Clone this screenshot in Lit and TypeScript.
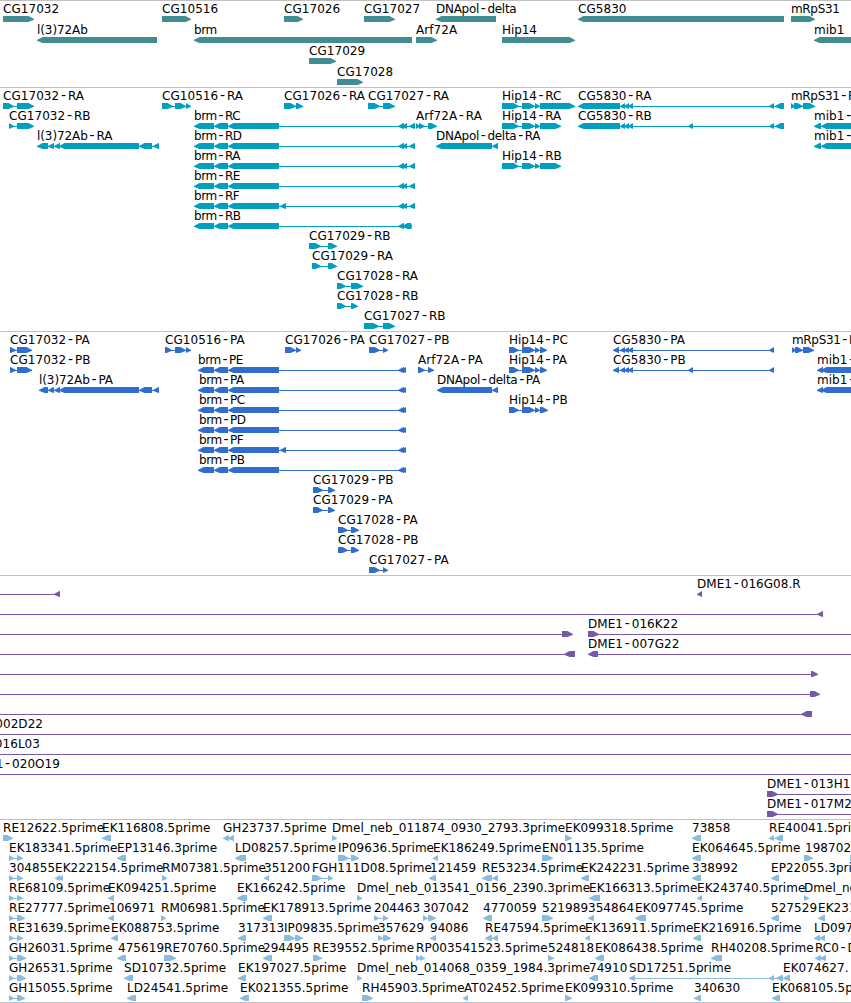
import { LitElement, html, svg, css } from "lit";
import { customElement, property } from "lit/decorators.js";

type Dir = ">" | "<";

interface Feature {
  row: number;
  x: number;
  dir: Dir;
  label: string;
  parts: [number, number][];
  line?: [number, number];
  endX?: number;
}

/* Each line: row, label x, direction, label ("." for none), blocks "a-b,c-d", optional connector "a:b". */
function parse(text: string): Feature[] {
  return text
    .trim()
    .split("\n")
    .map((raw) => {
      const [row, x, dir, label, blocks, line] = raw.trim().split(" ");
      const end = x.startsWith("e");
      return {
        row: Number(row),
        x: end ? 0 : Number(x),
        endX: end ? Number(x.slice(1)) : undefined,
        dir: dir as Dir,
        label: label === "." ? "" : label,
        parts:
          blocks === "."
            ? []
            : blocks.split(",").map((b) => b.split("-").map(Number) as [number, number]),
        line: line ? (line.split(":").map(Number) as [number, number]) : undefined,
      };
    });
}

const GENES = parse(`
0 3 > CG17032 3-34
0 162 > CG10516 162-191
0 284 > CG17026 284-303
0 364 > CG17027 364-395
0 436 < DNApol-delta 436-496
0 578 < CG5830 578-784
0 791 > mRpS31 791-815
1 37 < l(3)72Ab 37-157
1 194 < brm 194-412
1 416 > Arf72A 416-437
1 502 > Hip14 502-575
1 814 < mib1 814-870
2 309 > CG17029 309-336
3 337 > CG17028 337-363`);

const BRM_R = "194-214,214-228,228-279";
const BRM_P = "198-214,214-228,228-279";

const TRANSCRIPTS = parse(`
0 3 > CG17032-RA 3-14,17-34
1 9 > CG17032-RB 9-14,17-34
2 37 < l(3)72Ab-RA 37-48,48-54,54-60,59-139,139-152,153-159
0 162 > CG10516-RA 162-173,175-186,186-191
0 284 > CG17026-RA 284-296,296-303
0 368 > CG17027-RA 368-380,383-395
1 194 < brm-RC ${BRM_R},398-404,402-407,409-415
2 194 < brm-RD ${BRM_R},398-404,402-407,409-415
3 194 < brm-RA ${BRM_R},398-404,402-407,409-415
4 194 < brm-RE ${BRM_R},398-404,402-407,409-415
5 194 < brm-RF ${BRM_R},280-286,398-404,402-407,409-415
6 194 < brm-RB ${BRM_R},398-404,402-411,411-412
1 416 > Arf72A-RA 416-420,419-425,428-437
2 436 < DNApol-delta-RA 436-492,492-498
0 502 > Hip14-RC 502-519,522-535,535-540,540-575
1 502 > Hip14-RA 502-519,522-535,535-540,540-561
3 502 > Hip14-RB 502-519,522-535,535-540,540-561
0 578 < CG5830-RA 578-620,620-625,624-629,628-633,769-774,775-784
1 578 < CG5830-RB 578-620,620-625,624-629,628-633,688-693,769-774,775-784
0 791 > mRpS31-RA 791-795,794-803,803-815
1 814 < mib1-RA 814-821,821-870
2 814 < mib1-RB 814-821,821-870
7 309 > CG17029-RB 309-321,328-337
8 312 > CG17029-RA 312-321,328-337
9 337 > CG17028-RA 337-346,351-363
10 337 > CG17028-RB 337-346,351-358
11 364 > CG17027-RB 364-379,383-395`);

const PROTEINS = parse(`
0 10 > CG17032-PA 10-16,17-32
1 10 > CG17032-PB 10-16,17-32
2 39 < l(3)72Ab-PA 39-48,48-54,54-60,59-139,139-152,153-159
0 165 > CG10516-PA 165-172,175-186,186-191
0 285 > CG17026-PA 285-296,296-301
0 369 > CG17027-PB 369-380,383-388
1 198 < brm-PE ${BRM_P},398-404,401-406
2 199 < brm-PA ${BRM_P},398-404,401-406
3 199 < brm-PC ${BRM_P},398-404,401-406
4 199 < brm-PD ${BRM_P},398-404,401-406
5 199 < brm-PF ${BRM_P},280-286,398-404,401-406
6 199 < brm-PB ${BRM_P},398-404,401-406
1 418 > Arf72A-PA 418-425,428-434
2 437 < DNApol-delta-PA 437-492,492-498
0 509 > Hip14-PC 509-519,522-535,535-540,540-547
1 509 > Hip14-PA 509-519,522-535,535-540,540-547
3 509 > Hip14-PB 509-519,522-535,535-540,540-548
0 613 < CG5830-PA 613-619,620-625,624-629,628-633,769-774
1 613 < CG5830-PB 613-619,620-625,624-629,628-633,688-693,769-774
0 792 > mRpS31-PA 792-796,795-803,803-814
1 817 < mib1-PA 817-823,821-870
2 817 < mib1-PB 817-823,821-870
7 313 > CG17029-PB 313-323,328-335
8 313 > CG17029-PA 313-323,328-335
9 338 > CG17028-PA 338-348,351-359
10 338 > CG17028-PB 338-348,351-359
11 369 > CG17027-PA 369-380,383-388`);

const BACS = parse(`
0 0 < . 54-60 0:60
0 697 < DME1-016G08.R 697-702
1 0 < . 817-823 0:823
2 0 > . 562-573 0:572
2 588 > DME1-016K22 588-599 588:851
3 0 < . 564-575 0:575
3 588 < DME1-007G22 588-598 588:851
4 0 > . 811-818 0:818
5 0 > . 810-820 0:820
6 0 < . 801-812 0:812
7 e43 > DME1-002D22 . 0:851
8 e40 > DME1-016L03 . 0:851
9 e60 > DME1-020O19 . 0:851
10 767 > DME1-013H12 767-778 767:851
11 767 > DME1-017M2 767-778 767:851`);

const ESTS = parse(`
0 3 > RE12622.5prime 3-13
0 102 < EK116808.5prime 102-111
0 223 < GH23737.5prime 223-229,228-234
0 332 > Dmel_neb_011874_0930_2793.3prime 332-337
0 565 > EK099318.5prime 565-572
0 692 < 73858 692-701
0 769 < RE40041.5prime 769-774,775-783
1 9 > EK183341.5prime 9-14,17-23
1 117 < EP13146.3prime 117-126
1 235 < LD08257.5prime 235-246
1 338 > IP09636.5prime 338-349,351-359
1 433 < EK186249.5prime 433-438
1 542 > EN01135.5prime 542-553
1 692 < EK064645.5prime 692-701
1 805 > 198702 804-813
1 850 > . 850-860
2 9 > 304855 9-14,17-23
2 55 < EK222154.5prime 55-60,58-63
2 162 > RM07381.5prime 162-167
2 264 < 351200 264-269
2 312 > FGH111D08.5prime 312-322,328-333
2 430 < 121459 429-436
2 482 < RE53234.5prime 482-492,492-498
2 581 < EK242231.5prime 581-589
2 692 < 338992 692-701
2 771 < EP22055.3prime 771-779
3 9 > RE68109.5prime 9-14,17-23
3 108 < EK094251.5prime 108-114
3 237 < EK166242.5prime 237-247
3 357 > Dmel_neb_013541_0156_2390.3prime 357-362
3 589 < EK166313.5prime 589-600
3 697 < EK243740.5prime 697-702
3 804 > Dmel_neb_0135 804-809
4 9 > RE27777.5prime 9-14,17-25
4 109 < 106971 108-114
4 161 > RM06981.5prime 161-166
4 263 < EK178913.5prime 263-272
4 374 > 204463 374-379,383-388
4 423 > 307042 423-428,428-436
4 483 < 4770059 483-492
4 542 > 521989 542-553
4 588 < 354864 588-594
4 635 < EK097745.5prime 635-646
4 771 < 527529 771-779
4 818 < EK231 818-825
5 9 > RE31639.5prime 9-14,17-23
5 111 < EK088753.5prime 111-118
5 238 < 317313 238-246
5 284 > IP09835.5prime 284-295,295-303
5 378 > 357629 378-383,383-391
5 430 < 94086 430-436
5 485 < RE47594.5prime 485-492,492-498
5 585 < EK136911.5prime 585-590
5 693 < EK216916.5prime 693-701
5 814 < LD097 814-820,819-825
6 9 > GH26031.5prime 9-14,17-26
6 118 < 475619 117-126
6 164 > RE70760.5prime 164-176
6 263 < 294495 263-272
6 313 > RE39552.5prime 313-322
6 416 > RP003541523.5prime 416-421,420-425
6 548 > 524818 548-554
6 595 < EK086438.5prime 595-604
6 711 < RH40208.5prime 711-722
6 815 < RC0-D 815-821,820-826
7 9 > GH26531.5prime 9-14,17-26
7 124 < SD10732.5prime 124-133
7 238 < EK197027.5prime 238-246
7 357 > Dmel_neb_014068_0359_1984.3prime 357-362
7 589 < 74910 589-598
7 629 < SD17251.5prime 629-635,769-774,776-783
7 783 < EK074627. 783-790
8 9 > GH15055.5prime 9-14,17-25
8 127 < LD24541.5prime 127-136
8 240 < EK021355.5prime 240-249
8 362 > RH45903.5prime 362-373
8 464 < AT02452.5prime 463-468
8 565 > EK099310.5prime 565-572
8 694 < 340630 694-701
8 772 < EK068105.5prime 772-780`);

const WIDTH = 851;

const TRACKING: [string, number][] = [
  ["brm", -0.45],
  ["mRpS31", -0.33],
  ["DNApol", -0.28],
  ["Hip14", -0.1],
  ["l(3)", -0.08],
];

@customElement("feature-track")
export class FeatureTrack extends LitElement {
  @property({ attribute: false }) features: Feature[] = [];
  @property({ type: Number }) pitch = 20;
  @property({ type: Number }) size = 100;

  static styles = css`
    :host {
      display: block;
      border-top: 1px solid #c0c0c0;
    }
    .canvas {
      display: block;
      overflow: visible;
    }
    .label {
      font-family: "DejaVu Sans", sans-serif;
      font-size: 12px;
      fill: #000;
      white-space: pre;
    }
    .dash {
      font-size: 14px;
    }
    .shape {
      fill: currentColor;
    }
  `;

  private block([a, b]: [number, number], dir: Dir, top: number) {
    const taper = Math.min(5.5, b - a);
    const y0 = top;
    const y1 = top + 6;
    const mid = top + 3;
    const pts =
      dir === ">"
        ? `${a},${y0} ${b - taper},${y0} ${b},${mid} ${b},${mid + 0.8} ${b - taper},${y1} ${a},${y1}`
        : `${b},${y0} ${a + taper},${y0} ${a},${mid} ${a},${mid + 0.8} ${a + taper},${y1} ${b},${y1}`;
    return svg`<polygon class="shape" points=${pts}></polygon>`;
  }

  private label(f: Feature, y: number) {
    if (!f.label) return null;
    const words = f.label.split("-");
    const rest = words
      .slice(1)
      .map(
        (w) =>
          svg`<tspan class="dash" dx="1.7" dy="0.3">-</tspan><tspan dx="1.9" dy="-0.3">${w}</tspan>`
      );
    const tracking = TRACKING.find(([name]) => f.label.startsWith(name))?.[1] ?? 0.05;
    return svg`<text class="label" x=${f.endX ?? f.x} y=${y} letter-spacing=${tracking} text-anchor=${
      f.endX === undefined ? "start" : "end"
    }>${words[0]}${rest}</text>`;
  }

  private feature(f: Feature) {
    const top = 15 + f.row * this.pitch;
    const first = f.parts[0];
    const last = f.parts[f.parts.length - 1];
    const line = f.line ?? (f.parts.length > 1 ? [first[0], last[1]] : null);
    return svg`
      ${line
        ? svg`<rect class="shape" x=${line[0]} y=${top + 3} width=${line[1] - line[0]} height="1"></rect>`
        : null}
      ${f.parts.map((p) => this.block(p, f.dir, top))}
      ${this.label(f, top - 3)}`;
  }

  render() {
    return html`<svg class="canvas" width=${WIDTH} height=${this.size}>
      ${this.features.map((f) => this.feature(f))}
    </svg>`;
  }
}

@customElement("app-root")
export class AppRoot extends LitElement {
  static styles = css`
    :host {
      display: block;
      width: 851px;
      height: 1003px;
      overflow: hidden;
      background: #fff;
    }
    .tracks {
      display: flex;
      flex-direction: column;
      border-bottom: 1px solid #c0c0c0;
    }
    .genes {
      color: #408e92;
    }
    .transcripts {
      color: #009fc0;
    }
    .proteins {
      color: #306dce;
    }
    .bacs {
      color: #7757a8;
    }
    .ests {
      color: #88bbdd;
    }
  `;

  render() {
    return html`<main class="tracks">
      <feature-track class="genes" .features=${GENES} .pitch=${21} .size=${86}></feature-track>
      <feature-track class="transcripts" .features=${TRANSCRIPTS} .size=${243}></feature-track>
      <feature-track class="proteins" .features=${PROTEINS} .size=${243}></feature-track>
      <feature-track class="bacs" .features=${BACS} .size=${243}></feature-track>
      <feature-track class="ests" .features=${ESTS} .size=${182}></feature-track>
    </main>`;
  }
}
